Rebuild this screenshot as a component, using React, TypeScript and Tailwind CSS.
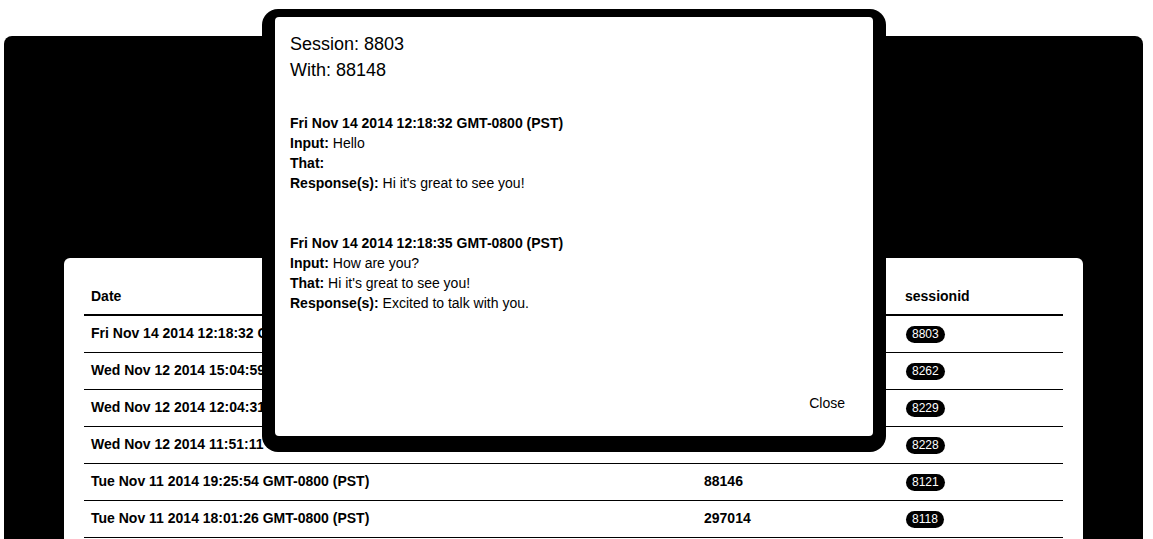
import React from "react";

const rows = [
  { date: "Fri Nov 14 2014 12:18:32 GMT-0800 (PST)", user: "88148", session: "8803" },
  { date: "Wed Nov 12 2014 15:04:59 GMT-0800 (PST)", user: "71102", session: "8262" },
  { date: "Wed Nov 12 2014 12:04:31 GMT-0800 (PST)", user: "64511", session: "8229" },
  { date: "Wed Nov 12 2014 11:51:11 GMT-0800 (PST)", user: "64511", session: "8228" },
  { date: "Tue Nov 11 2014 19:25:54 GMT-0800 (PST)", user: "88146", session: "8121" },
  { date: "Tue Nov 11 2014 18:01:26 GMT-0800 (PST)", user: "297014", session: "8118" },
];

const entries = [
  {
    time: "Fri Nov 14 2014 12:18:32 GMT-0800 (PST)",
    input: "Hello",
    that: "",
    response: "Hi it's great to see you!",
  },
  {
    time: "Fri Nov 14 2014 12:18:35 GMT-0800 (PST)",
    input: "How are you?",
    that: "Hi it's great to see you!",
    response: "Excited to talk with you.",
  },
];

const App = () => {
  return (
    <div className="relative h-[539px] overflow-hidden bg-white font-['Liberation_Sans',Arial,sans-serif] text-black">
      <div className="ml-1 mr-[10px] mt-9 h-[503px] rounded-t-lg bg-black px-[60px] pt-[222px]">
        <div className="h-full rounded-t-md bg-white px-5 pt-5">
          <table className="w-full table-fixed border-collapse text-[14px]">
            <colgroup>
              <col className="w-[613px]" />
              <col className="w-[201px]" />
              <col />
            </colgroup>
            <thead>
              <tr className="h-[37px] border-b-2 border-black text-left">
                <th className="pl-[7px] font-bold">Date</th>
                <th className="pl-[7px] font-bold">user</th>
                <th className="pl-[7px] font-bold">sessionid</th>
              </tr>
            </thead>
            <tbody>
              {rows.map((r) => (
                <tr key={r.session} className="h-[37px] border-b border-black">
                  <td className="pl-[7px] font-bold">{r.date}</td>
                  <td className="pl-[7px] font-bold">{r.user}</td>
                  <td className="pl-[8px]">
                    <span className="inline-block rounded-full bg-black px-[6px] text-[12px] leading-[17px] text-white">
                      {r.session}
                    </span>
                  </td>
                </tr>
              ))}
            </tbody>
          </table>
        </div>
      </div>

      <div className="absolute left-[262px] top-[9px] h-[443px] w-[624px] rounded-2xl bg-black pb-4 pl-[13px] pr-[13px] pt-2">
        <div className="flex h-full flex-col rounded bg-white px-[15px] pt-[14px] pb-[23px]">
          <div className="text-[18px] leading-[26px]">
            <div>Session: 8803</div>
            <div>With: 88148</div>
          </div>
          <div className="mt-[30px] flex flex-col gap-10 text-[14px] leading-5">
            {entries.map((e) => (
              <div key={e.time}>
                <div className="font-bold">{e.time}</div>
                <div>
                  <span className="font-bold">Input:</span> {e.input}
                </div>
                <div>
                  <span className="font-bold">That:</span> {e.that}
                </div>
                <div>
                  <span className="font-bold">Response(s):</span> {e.response}
                </div>
              </div>
            ))}
          </div>
          <div className="mt-auto flex justify-end pr-[13px]">
            <button className="text-[14px] leading-5">Close</button>
          </div>
        </div>
      </div>
    </div>
  );
};

export default App;
